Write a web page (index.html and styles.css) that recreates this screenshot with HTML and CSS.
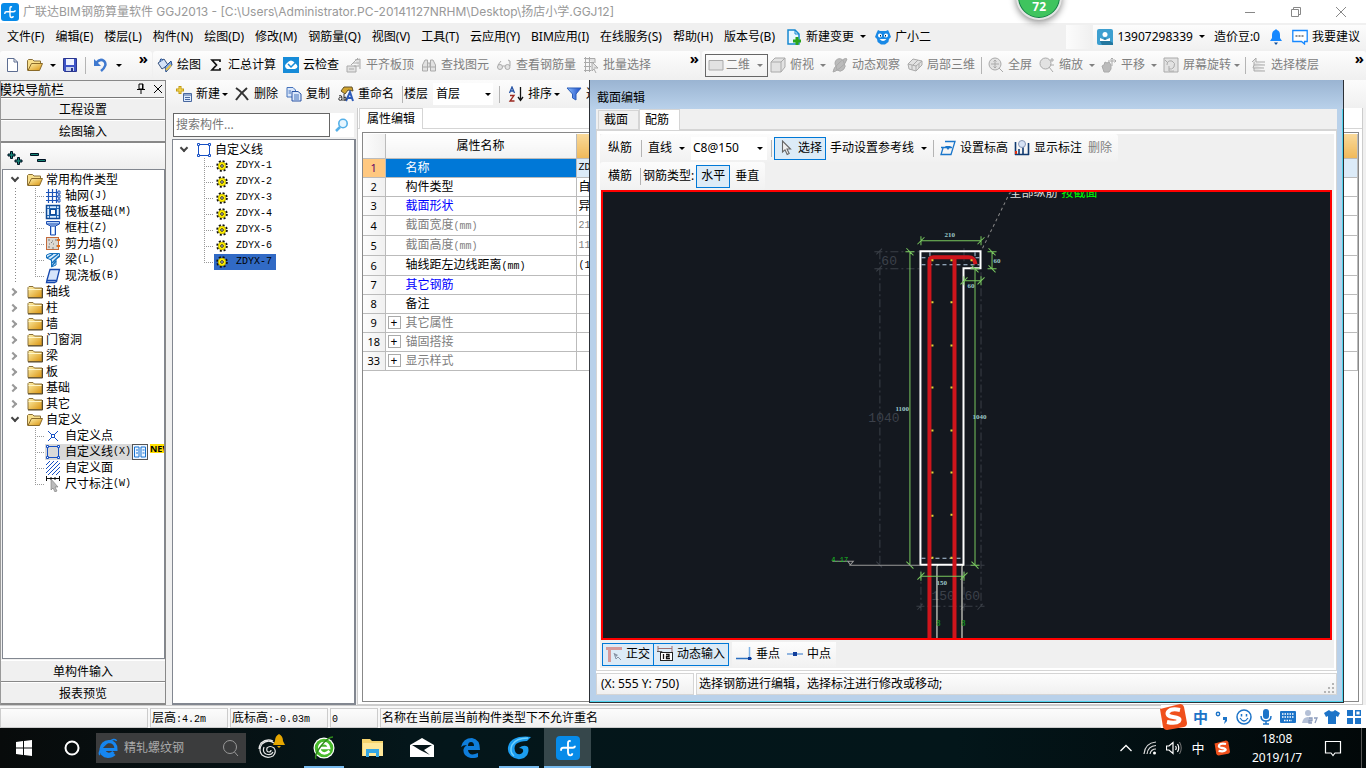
FILE: index.html
```html
<!DOCTYPE html>
<html lang="zh-CN">
<head>
<meta charset="utf-8">
<title>广联达BIM钢筋算量软件 GGJ2013</title>
<link rel="stylesheet" href="styles.css">
</head>
<body>
<svg class="defs" aria-hidden="true">
  <defs>
    <linearGradient id="gold" x1="0" y1="0" x2="1" y2="1"><stop offset="0" stop-color="#fff3b0"/><stop offset="1" stop-color="#d9920c"/></linearGradient>
    <linearGradient id="funnel"><stop offset="0" stop-color="#8fc1ff"/><stop offset="1" stop-color="#1747c4"/></linearGradient>
  </defs>
  <symbol id="folder" viewBox="0 0 16 16"><path d="M1 13.500V3.500L2 2.500H6L7.500 4H15V13.500Z" fill="url(#gold)" stroke="#8a7038"/><path d="M1.500 5.500H14.500" stroke="#fff6c8"/><path d="M15.500 4V14H1" fill="none" stroke="#54472a"/></symbol>
  <symbol id="open" viewBox="0 0 16 16"><path d="M.5 13.500V3.500L1.500 2.500H5.500L7 4H13.500V7" fill="#f8df8c" stroke="#8a7038"/><path d="M1 13.500L4.500 6.500H15.500L12.500 13.500Z" fill="url(#gold)" stroke="#8a6a28"/></symbol>
  <symbol id="gear" viewBox="0 0 12 12"><circle cx="6" cy="6" r="4.800" fill="none" stroke="#111" stroke-width="2" stroke-dasharray="2 1.770"/><circle cx="6" cy="6" r="3.900" fill="#ffef00" stroke="#8a8000" stroke-width=".5"/><circle cx="6" cy="6" r="1.300" fill="#fff" stroke="#222"/></symbol>
  <symbol id="frame" viewBox="0 0 16 16"><path d="M2.500 2.500H13.500V13.500H2.500Z" fill="none" stroke="#1650c4"/><path d="M1.500 1.500h2v2h-2zM12.500 1.500h2v2h-2zM1.500 12.500h2v2h-2zM12.500 12.500h2v2h-2z" fill="#fff" stroke="#1650c4"/></symbol>
  <symbol id="axes" viewBox="0 0 16 16"><path d="M3.500 1V15M7.500 1V15M11.500 1V15M1 4.500H15M1 8.500H15M1 12.500H15" stroke="#1e55b8" stroke-width="1.200"/><path d="M13 3h2v3h-2zM13 7h2v3h-2zM13 11h2v3h-2z" fill="#fff" stroke="#1e55b8"/></symbol>
  <symbol id="raft" viewBox="0 0 16 16"><rect x="1.500" y="1.500" width="13" height="13" fill="#d8ecff" stroke="#0f4a96" stroke-width="1.500"/><path d="M4.500 2V14M11.500 2V14M2 4.500H14M2 11.500H14" stroke="#2367b4"/><rect x="5.500" y="5.500" width="5" height="5" fill="#fff" stroke="#0f4a96"/></symbol>
  <symbol id="column" viewBox="0 0 16 16"><path d="M1.500 1.500H14.500V4L10.500 6V15H5.500V6L1.500 4Z" fill="#b8d4fa" stroke="#1d4db0"/><path d="M1.500 4H14M5.500 6H10.500" stroke="#1d4db0"/><path d="M8 7V14" stroke="#fff" stroke-width="2"/></symbol>
  <symbol id="wall" viewBox="0 0 16 16"><rect x="1.500" y="1.500" width="12" height="12" fill="#ddd8d2" stroke="#c46a3b"/><path d="M3 4H5M7 5H8M10 4H12M4 8H5M8 8H9M3 11H5M7 12H9M11 10H12M6 6.500H7" stroke="#777"/><path d="M12 4H15M12 10H15" stroke="#e36b16" stroke-width="2"/></symbol>
  <symbol id="beam" viewBox="0 0 16 16"><path d="M1.500 3L5 1.500H14.500V5L11 7V13L6.500 15V8L1.500 6Z" fill="#d5ecff" stroke="#1672bd"/><path d="M2 6L8 2M5 8L13 2M7 14L11 9M7 11L14 4" stroke="#1672bd" stroke-width="1.400"/></symbol>
  <symbol id="slab" viewBox="0 0 16 16"><path d="M5 1.500H14.500L11.500 13.500L9.500 14.500H1.500L2 12Z" fill="#d5e4fb" stroke="#1547ad" stroke-width="1.300"/><path d="M2 12.500H11.500" stroke="#1547ad" stroke-width="1.500"/></symbol>
  <symbol id="arrow" viewBox="0 0 16 16"><path d="M4.500 1V12L7 9.800L9.200 14.500L11.200 13.500L9 9H12.500Z" fill="#eee" stroke="#666" stroke-width="1.100"/></symbol>
  <symbol id="sogou" viewBox="0 0 28 28"><path d="M1 6L21 1Q24 1 25 4L28 20Q28 23 25 24L8 27Q5 27 4 24Z" fill="#f0501c"/><path d="M21 7Q12 5 9 9Q7 13 14 14Q22 15 20 18Q17 21 8 19" fill="none" stroke="#fff" stroke-width="4"/></symbol>
  <symbol id="glodon" viewBox="0 0 18 18"><rect width="18" height="18" rx="3" fill="#078be9"/><path d="M11 4Q9 3 9 5.500V12Q9 14.500 10.800 14.500Q12.200 14.500 12.200 13M3.800 11V10.500Q3.800 8.800 5.500 8.800H12.500Q14.200 8.800 14.200 7.300" fill="none" stroke="#fff" stroke-width="1.400"/></symbol>
  <symbol id="ie" viewBox="0 0 20 20"><path d="M15.500 14Q13 17 9.500 16Q6 15 6 11.500H18Q18 4 11 3.500Q4 4 3 11Q3 18 10 18.500Q14 18.500 16.500 16" fill="none" stroke="currentColor" stroke-width="3"/><path d="M2 17Q-1 14 9 5Q17-1 18.500 3" fill="none" stroke="currentColor" stroke-width="1.500"/></symbol>
</svg>

<div class="app">
  <header class="titlebar">
    <svg class="i18"><use href="#glodon"/></svg>
    <h1>广联达BIM钢筋算量软件 GGJ2013 - [C:\Users\Administrator.PC-20141127NRHM\Desktop\扬店小学.GGJ12]</h1>
    <div class="winbtns">
      <button aria-label="最小化"><svg viewBox="0 0 12 12"><path d="M1 6.500H11"/></svg></button>
      <button aria-label="还原"><svg viewBox="0 0 12 12"><path d="M1.500 3.500H8.500V10.500H1.500ZM3.500 3V1.500H10.500V8.500H9"/></svg></button>
      <button aria-label="关闭"><svg viewBox="0 0 12 12"><path d="M1 1L11 11M11 1L1 11"/></svg></button>
    </div>
    <div class="ball">72</div>
  </header>

  <nav class="menubar">
    <button>文件(F)</button><button>编辑(E)</button><button>楼层(L)</button><button>构件(N)</button><button>绘图(D)</button><button>修改(M)</button><button>钢筋量(Q)</button><button>视图(V)</button><button>工具(T)</button><button>云应用(Y)</button><button>BIM应用(I)</button><button>在线服务(S)</button><button>帮助(H)</button><button>版本号(B)</button>
    <button><svg class="i16" viewBox="0 0 16 16"><path d="M2 1H9L13 5V15H2Z" fill="#eaf7ff" stroke="#1788d0" stroke-width="1.500"/><path d="M9 1V5H13" fill="none" stroke="#1788d0"/><path d="M11 8V16M7 12H15" stroke="#2aa51c" stroke-width="3"/></svg>新建变更<i class="arr"></i></button>
    <button><svg class="i16" viewBox="0 0 16 16"><path d="M3 1L5 2H11L13 1L14.500 4L16 8L14 10Q14 13 12 14L10 15.500H6L4 14Q2 13 2 10L0 8L1.500 4Z" fill="#1989e6"/><circle cx="5" cy="6.500" r="2" fill="#fff"/><circle cx="11" cy="6.500" r="2" fill="#fff"/><path d="M4.500 10H11.500Q8 14 4.500 10" fill="#fff"/><path d="M5.500 6V7.500M10.500 6V7.500" stroke="#024"/></svg>广小二</button>
    <span class="blank"></span>
    <div class="account">
      <button><svg class="i16" viewBox="0 0 16 16"><rect width="16" height="16" rx="2" fill="#3d9fd0"/><path d="M8 9L16 14V16H5L3 12Z" fill="#24789f"/><circle cx="8" cy="5.500" r="2.500" fill="#fff"/><path d="M3 9L8 11L13 9V12H3Z" fill="#fff"/></svg>13907298339<i class="arr"></i></button>
      <button>造价豆:0</button>
      <button aria-label="消息"><svg class="i16" viewBox="0 0 16 16"><path d="M8 0L9 1Q12 2 12 6V9L14 12H2L4 9V6Q4 2 7 1Z" fill="#1688ff"/><path d="M6 13.500H10L8 16Z" fill="#0b4fa0"/></svg></button>
      <button><svg class="i16" viewBox="0 0 16 16"><path d="M.8 1.500H15.200V12.500H12.500V15L9.500 12.500H.8Z" fill="#fff" stroke="#1688ff" stroke-width="1.300"/><path d="M3.500 7H12.500" stroke="#222" stroke-width="1.200" stroke-dasharray="2 1"/></svg>我要建议</button>
    </div>
  </nav>

  <div class="toolbar main-tools">
    <div class="grp files">
      <button aria-label="新建文件"><svg class="i16" viewBox="0 0 16 16"><path d="M3.500 1.500H10L13.500 5V14.500H3.500Z" fill="#fff" stroke="#5d6d91"/><path d="M10 1.500V5H13.500" fill="none" stroke="#5d6d91"/></svg></button>
      <button aria-label="打开"><svg class="i16"><use href="#open"/></svg><i class="arr"></i></button>
      <button aria-label="保存"><svg class="i16" viewBox="0 0 16 16"><path d="M1.500 1.500H14.500V14.500H2.500L1.500 13.500Z" fill="#3d53c6" stroke="#2a368f"/><path d="M4 2H12V8H4Z" fill="#eef2ff"/><path d="M4 10H12V14H4Z" fill="#c9d3ee"/><path d="M9 11H11V14H9Z" fill="#26348b"/></svg></button>
      <i class="sep"></i>
      <button aria-label="撤销"><svg class="i16" viewBox="0 0 16 16"><path d="M3 6Q7 1 11 4Q15 8 8 14" fill="none" stroke="#3f79cf" stroke-width="2.500"/><path d="M1 2V9H8Z" fill="#3f79cf"/></svg><i class="arr"></i></button>
      <button class="more">»</button>
    </div>
    <div class="grp ops">
      <button><svg class="i16" viewBox="0 0 16 16"><path d="M1 6L7 2L11 8L5 12Z" fill="#d4e3f8" stroke="#38537e"/><path d="M3 5Q3 0 6 3M8 10L14 4L15 8L9 15Z" fill="#7ea6df" stroke="#274f8f"/><path d="M9 13L14 8" stroke="#e8c54c" stroke-width="2"/></svg>绘图</button>
      <button><svg class="i16" viewBox="0 0 16 16"><path d="M12 5V3H4L8.500 8L4 13H12V11" fill="none" stroke="#111" stroke-width="1.700"/></svg>汇总计算</button>
      <button><svg class="i16" viewBox="0 0 16 16"><rect width="16" height="16" fill="#168bd8"/><path d="M4 12Q0 9 4 6Q8 1 12 6Q17 10 12 12Z" fill="#fff"/><path d="M5 7L8 10L13 5" fill="none" stroke="#168bd8" stroke-width="1.500"/></svg>云检查</button>
      <button disabled><svg class="i16 gi" viewBox="0 0 16 16"><path d="M1 9H10V15H1ZM3 12H8M5 8L12 1M9 3L14 2V12M7 6H13M8 9H13"/></svg>平齐板顶</button>
      <button disabled><svg class="i16 gi" viewBox="0 0 16 16"><path d="M1.500 14V8L4 3H6.500V14ZM9.500 14V3H12L14.500 8V14ZM7 6H9V10H7M2 10H6M10 10H14"/></svg>查找图元</button>
      <button disabled><svg class="i16 gi" viewBox="0 0 16 16"><path d="M1.500 10a2.500 2.500 0 1 1 5 0a2.500 2.500 0 1 1-5 0M9 10a2.500 2.500 0 1 1 5 0a2.500 2.500 0 1 1-5 0M6.500 9H9M2 8L5 4M14 9V4L12 3"/></svg>查看钢筋量</button>
      <button disabled><svg class="i16 gi" viewBox="0 0 16 16"><path d="M1 1.500H12V6M1 5.500H11M1 9.500H8M1 13.500H8M2.500 0V15M6.500 0V15M9 5V14L11 12L13 16M9 5L15 11H11"/></svg>批量选择</button>
      <button class="more">»</button>
    </div>
    <div class="grp view">
      <label class="combo boxed"><svg class="i16 gi" viewBox="0 0 16 16"><path d="M1 3.500H15V13H1Z"/></svg><select aria-label="视图模式" disabled><option>二维</option></select><i class="arr"></i></label>
      <button disabled><svg class="i16 gi" viewBox="0 0 16 16"><path d="M1 5L5 1H15V10L11 15H1ZM1 5H11V15M11 5L15 1"/></svg>俯视<i class="arr"></i></button>
      <button disabled><svg class="i16 gi" viewBox="0 0 16 16"><path d="M4 9a4.500 4.500 0 1 1 8-3a5 5 0 0 1-7 7ZM1 15Q1 11 7 6Q13 0 15 2Q14 7 8 11Q3 15 1 15" fill="#bbb"/></svg>动态观察</button>
      <button disabled><svg class="i16 gi" viewBox="0 0 16 16"><path d="M1 7L6 2L15 4V8L9 14L2 12ZM1 7L9 9V14M9 9L15 4M5 8V13M11 3L6 8M12 7V11"/></svg>局部三维</button>
      <i class="sep"></i>
      <button disabled><svg class="i16 gi" viewBox="0 0 16 16"><circle cx="7" cy="7" r="6"/><path d="M7 3V11M3 7H11M5.500 4.500L7 3L8.500 4.500M5.500 9.500L7 11L8.500 9.500M11 11L15 15"/></svg>全屏</button>
      <button disabled><svg class="i16 gi" viewBox="0 0 16 16"><circle cx="6.500" cy="6.500" r="5.500"/><path d="M10 10L14 15M13 1V5M11 3H15M11 8H15"/></svg>缩放<i class="arr"></i></button>
      <button disabled><svg class="i16 gi" viewBox="0 0 16 16"><path d="M3 15L1 9L3 8L4 5L6 6L8 5L10 8V12L8 15Z" fill="#bbb"/><path d="M11 1V9M7 4H15M9.500 2.500L11 1L12.500 2.500M13.500 2.500L15 4L13.500 5.500" fill="none"/></svg>平移<i class="arr"></i></button>
      <button disabled class="spin"><svg class="i16 gi" viewBox="0 0 16 16"><path d="M1 1H15V15H1ZM4 8Q4 3 9 4Q13 6 11 10Q9 13 6 12M6 9V14H11M2 3L5 6"/></svg>屏幕旋转<i class="arr"></i></button>
      <i class="sep"></i>
      <button disabled><svg class="i16 gi" viewBox="0 0 16 16"><path d="M1 5L5 1V5H14M3 5V8H14M3 8L2 11H13M3 11V14H14"/></svg>选择楼层</button>
      <button class="more">»</button>
    </div>
  </div>

  <main class="work">
    <aside class="nav">
      <div class="nav-title"><h2>模块导航栏</h2><button aria-label="固定"><svg viewBox="0 0 12 12"><path d="M4 1H8V6H4ZM7.500 1V6M2 6.500H10M6 7V11"/></svg></button><button aria-label="关闭"><svg viewBox="0 0 12 12"><path d="M2 2L10 10M10 2L2 10"/></svg></button></div>
      <button class="bar">工程设置</button>
      <button class="bar">绘图输入</button>
      <div class="nav-tools">
        <button aria-label="全部展开"><svg class="i16" viewBox="0 0 16 16"><path d="M3.500 1.500H5.500V4H8V6H5.500V8.500H3.500V6H1V4H3.500ZM10.500 7.500H12.500V10H15V12H12.500V14.500H10.500V12H8V10H10.500Z" fill="#168476" stroke="#012"/></svg></button>
        <button aria-label="全部折叠"><svg class="i16" viewBox="0 0 16 16"><path d="M.5 3.500H8.500V5.500H.5ZM7.500 9.500H15.500V11.500H7.500Z" fill="#168476" stroke="#012"/></svg></button>
      </div>
      <ul class="tree">
        <li class="grp-row open"><i class="chev"></i><svg class="i16"><use href="#open"/></svg>常用构件类型</li>
        <li><ul class="kids lined">
          <li><svg class="i16"><use href="#axes"/></svg>轴网<span class="m">(J)</span></li>
          <li><svg class="i16"><use href="#raft"/></svg>筏板基础<span class="m">(M)</span></li>
          <li><svg class="i16"><use href="#column"/></svg>框柱<span class="m">(Z)</span></li>
          <li><svg class="i16"><use href="#wall"/></svg>剪力墙<span class="m">(Q)</span></li>
          <li><svg class="i16"><use href="#beam"/></svg>梁<span class="m">(L)</span></li>
          <li><svg class="i16"><use href="#slab"/></svg>现浇板<span class="m">(B)</span></li>
        </ul></li>
        <li class="grp-row"><i class="chev"></i><svg class="i16"><use href="#folder"/></svg>轴线</li>
        <li class="grp-row"><i class="chev"></i><svg class="i16"><use href="#folder"/></svg>柱</li>
        <li class="grp-row"><i class="chev"></i><svg class="i16"><use href="#folder"/></svg>墙</li>
        <li class="grp-row"><i class="chev"></i><svg class="i16"><use href="#folder"/></svg>门窗洞</li>
        <li class="grp-row"><i class="chev"></i><svg class="i16"><use href="#folder"/></svg>梁</li>
        <li class="grp-row"><i class="chev"></i><svg class="i16"><use href="#folder"/></svg>板</li>
        <li class="grp-row"><i class="chev"></i><svg class="i16"><use href="#folder"/></svg>基础</li>
        <li class="grp-row"><i class="chev"></i><svg class="i16"><use href="#folder"/></svg>其它</li>
        <li class="grp-row open"><i class="chev"></i><svg class="i16"><use href="#open"/></svg>自定义</li>
        <li><ul class="kids">
          <li><svg class="i16" viewBox="0 0 16 16"><path d="M3 3L13 13M13 3L3 13" stroke="#1650c4"/><rect x="6.500" y="6.500" width="3" height="3" fill="#fff" stroke="#1650c4"/></svg>自定义点</li>
          <li class="cur"><span class="hl"><svg class="i16"><use href="#frame"/></svg>自定义线<span class="m">(X)</span></span><svg class="i16 book" viewBox="0 0 16 16"><rect x=".5" y=".5" width="15" height="15" fill="#eef6ff" stroke="#555"/><path d="M2.500 3H7V13H2.500ZM9 3H13.500V13H9ZM4 6H6M4 9H6M10.500 6H12.500M10.500 9H12.500" fill="none" stroke="#1673d2"/></svg><b class="new">NEW</b></li>
          <li><svg class="i16" viewBox="0 0 16 16"><path d="M1 5L5 1M1 9L9 1M1 13L13 1M3 15L15 3M7 15L15 7M11 15L15 11" stroke="#1650c4"/></svg>自定义面</li>
          <li><svg class="i16" viewBox="0 0 16 16"><path d="M1.500 0V5M14.500 0V5M1 2.500H15M6 1V4M10 1V4" stroke="#111"/><path d="M6 3V14L8 12L10 16L12 15L10 11H13Z" fill="#bbb" stroke="#777" stroke-width=".6"/></svg>尺寸标注<span class="m">(W)</span></li>
        </ul></li>
      </ul>
      <button class="bar">单构件输入</button>
      <button class="bar">报表预览</button>
    </aside>

    <section class="right">
      <div class="toolbar comp-tools">
        <button><svg class="i16" viewBox="0 0 16 16"><path d="M4 0V8M0 4H8" stroke="#c29a10" stroke-width="3"/><path d="M4 1V7M1 4H7" stroke="#ffe564"/><path d="M7.500 7.500H15.500V15.500H7.500Z" fill="#dceafc" stroke="#48679f"/><path d="M8 9H15M9 11.500H14M9 13.500H14" stroke="#48679f"/></svg>新建<i class="arr"></i></button>
        <button><svg class="i16" viewBox="0 0 16 16"><path d="M2 2Q8 6 14 14M13 2Q6 8 2 14" fill="none" stroke="#333" stroke-width="2"/></svg>删除</button>
        <button><svg class="i16" viewBox="0 0 16 16"><path d="M1 1.500H7L9.500 4V11H1Z" fill="#dbe8fb" stroke="#4572bb"/><path d="M6 5.500H12L15 8V15H6Z" fill="#dbe8fb" stroke="#2b55a4"/><path d="M8 9H13M8 11H13M8 13H13M2.500 5H5M2.500 7H5" stroke="#4572bb"/></svg>复制</button>
        <button><svg class="i16" viewBox="0 0 16 16"><path d="M3 5L6 1H14L15 5L10 4L7 8Z" fill="#d2a52f" stroke="#61502a"/><path d="M8 15L12 6L15 15M9.500 12H14" fill="none" stroke="#2e5bb8" stroke-width="2"/><path d="M1 10Q4 8 4 13V15M4 11Q0 11 1 14Q3 15 4 13M6 8V15M6 12Q8 9 8 14H6" fill="none" stroke="#333"/></svg>重命名</button>
        <i class="sep"></i>
        <label class="combo floor">楼层<select><option>首层</option></select><i class="arr"></i></label>
        <i class="sep"></i>
        <button><svg class="i16" viewBox="0 0 16 16"><path d="M1.500 7L4 1L6.500 7M2.500 5H5.500" fill="none" stroke="#2452a4" stroke-width="1.300"/><path d="M2 9.500H6L2 15H6.500" fill="none" stroke="#9b2820" stroke-width="1.300"/><path d="M12.500 1V14M10 11L12.500 14.500L15 11" fill="none" stroke="#111" stroke-width="1.300"/></svg>排序<i class="arr"></i></button>
        <button><svg class="i16" viewBox="0 0 16 16"><path d="M1 2H15L10 8V14L6.500 12V8Z" fill="url(#funnel)" stroke="#2b5db8"/></svg>过滤</button>
      </div>
      <div class="panes">
        <section class="comps">
          <div class="search"><input type="text" placeholder="搜索构件..." aria-label="搜索构件"><button aria-label="搜索"><svg class="i16" viewBox="0 0 16 16"><circle cx="9" cy="6.500" r="4.200" fill="#e7f6ff" stroke="#55b0e8" stroke-width="1.600"/><path d="M6 10L2 14" stroke="#55b0e8" stroke-width="2.500"/></svg></button></div>
          <ul class="tree">
            <li class="grp-row open"><i class="chev"></i><svg class="i16"><use href="#frame"/></svg>自定义线</li>
            <li><ul class="kids">
              <li><span class="it"><svg><use href="#gear"/></svg>ZDYX-1</span></li>
              <li><span class="it"><svg><use href="#gear"/></svg>ZDYX-2</span></li>
              <li><span class="it"><svg><use href="#gear"/></svg>ZDYX-3</span></li>
              <li><span class="it"><svg><use href="#gear"/></svg>ZDYX-4</span></li>
              <li><span class="it"><svg><use href="#gear"/></svg>ZDYX-5</span></li>
              <li><span class="it"><svg><use href="#gear"/></svg>ZDYX-6</span></li>
              <li><span class="it sel"><svg><use href="#gear"/></svg>ZDYX-7</span></li>
            </ul></li>
          </ul>
        </section>
        <section class="props">
          <div class="tabs"><button class="tab on">属性编辑</button></div>
          <div class="sheet">
            <table>
              <thead><tr><th></th><th>属性名称</th><th class="val"></th></tr></thead>
              <tbody>
                <tr class="sel"><th>1</th><td>名称</td><td class="m">ZDYX-7</td></tr>
                <tr><th>2</th><td>构件类型</td><td>自定义线</td></tr>
                <tr><th>3</th><td class="blue">截面形状</td><td>异形</td></tr>
                <tr class="dim"><th>4</th><td>截面宽度<span class="m">(mm)</span></td><td class="m">210</td></tr>
                <tr class="dim"><th>5</th><td>截面高度<span class="m">(mm)</span></td><td class="m">1100</td></tr>
                <tr><th>6</th><td>轴线距左边线距离<span class="m">(mm)</span></td><td class="m">(105)</td></tr>
                <tr><th>7</th><td class="blue">其它钢筋</td><td></td></tr>
                <tr><th>8</th><td>备注</td><td></td></tr>
                <tr class="dim fold"><th>9</th><td><button aria-label="展开">+</button>其它属性</td><td></td></tr>
                <tr class="dim fold"><th>18</th><td><button aria-label="展开">+</button>锚固搭接</td><td></td></tr>
                <tr class="dim fold"><th>33</th><td><button aria-label="展开">+</button>显示样式</td><td></td></tr>
              </tbody>
            </table>
          </div>
        </section>
      </div>
    </section>

    <section class="dialog" role="dialog" aria-label="截面编辑">
      <h2>截面编辑</h2>
      <div class="dlg-body">
        <div class="tabs"><button class="tab">截面</button><button class="tab on">配筋</button></div>
        <div class="page">
          <div class="toolbar r1">
            <button>纵筋</button><i class="sep"></i>
            <button>直线<i class="arr"></i></button>
            <label class="combo rebar"><select aria-label="钢筋规格"><option>C8@150</option></select><i class="arr"></i></label><i class="sep"></i>
            <button class="on"><svg class="i16"><use href="#arrow"/></svg>选择</button>
            <button>手动设置参考线<i class="arr"></i></button><i class="sep"></i>
            <button><svg class="i16" viewBox="0 0 16 16"><path d="M5 1.500H15L11 14.500H1L3 8M1 7.500H12" fill="none" stroke="#1a76ca" stroke-width="1.300"/><path d="M5 6H11L8 10Z" fill="#1a76ca"/></svg>设置标高</button>
            <button><svg class="i16" viewBox="0 0 16 16"><path d="M1.500 2V15M14.500 3V15M1 14.500H15M5 9V14M9 7V14" stroke="#103a70" stroke-width="1.600"/><circle cx="8" cy="4" r="3.500" fill="#d6e2f5" stroke="#8898b8"/><path d="M1 11H3V14H1Z" fill="#e03010"/></svg>显示标注</button>
            <button disabled>删除</button>
          </div>
          <div class="toolbar r2">
            <button>横筋</button><i class="sep"></i><span>钢筋类型:</span><button class="on">水平</button><button>垂直</button>
          </div>
          <div class="canvas">
            <svg viewBox="604 192 726 445" preserveAspectRatio="xMidYMid meet">
              <g class="guide"><path d="M880.500 251V564M981.500 272V606M921.500 570V611M964.500 570V611M875 251.500H920M875 268.500H920M917 605.500H985M877 254L884 247M877 271L884 264M877 561L884 568M918 609L925 601M961 609L968 601M978 609L985 601M964.500 248V265M950 564.500H985"/></g>
              <path class="lead" d="M983 248L1010 193L1014 192"/>
              <g class="ghost"><text x="882" y="265">60</text><text x="869" y="421">1040</text><text x="932" y="599">150</text><text x="965" y="599">60</text></g>
              <path class="conc" d="M921 251H981V268H964V564H921Z"/>
              <path class="hid" d="M922 264.500H980M922 557.500H963M930.500 252V264M975.500 252V264M922 257.500H930M976 257.500H981"/>
              <path class="post" d="M937.500 638V566Q937.500 564.500 939 564.500M962.500 638V566Q962.500 564.500 964 564.500"/>
              <path class="bar-line" d="M930 638V261Q930 257 934 257H969Q975 257 976 264M955 257V638"/>
              <g class="dots"><path d="M932 260H934M951 260H953M971 260H973M932 302H934M951 302H953M932 345H934M951 345H953M932 387H934M951 387H953M932 430H934M951 430H953M932 472H934M951 472H953M932 515H934M951 514H953M932 557H934M951 557H953"/></g>
              <path class="dimline" d="M921.500 236V245M981.500 236V245M921 240.500H982M918 244L925 237M978 244L985 237M910.500 251V564M906 251.500H915M907 248L914 255M907 561L914 568M992.500 251V268M988 251.500H997M988 268.500H997M989 248L996 255M989 265L996 272M964.500 276V285M981.500 276V285M964 280.500H982M961 284L968 277M978 284L985 277M975.500 268V564M971 268.500H980M971 564.500H980M972 265L979 272M972 561L979 568M921.500 571V580M964.500 571V580M921 575.500H965M918 579L925 572M961 579L968 572"/>
              <path class="level" d="M833 560.500H854L851 564L848 560M850 564.500H921"/>
              <g class="num"><text x="945" y="237">210</text><text x="994" y="263">60</text><text x="968" y="288">60</text><text x="896" y="411">1100</text><text x="973" y="419">1040</text><text x="937" y="584">150</text></g>
              <text class="elev" x="832" y="561">4.17</text>
              <g class="green"><text x="937" y="625">8</text><text x="962" y="625">8</text></g>
              <text class="note" x="1010" y="197">全部纵筋<tspan dx="4">按截面</tspan></text>
            </svg>
          </div>
          <div class="toolbar r3">
            <button class="on"><svg class="i16" viewBox="0 0 16 16"><path d="M0 1H16V4H5V16H2V4H0Z" fill="#d79a9a"/><path d="M8 7L10 13L12 11L15 14" fill="none" stroke="#8793a5"/><path d="M8 7L12 9L10 11Z" fill="#8793a5"/></svg>正交</button><button class="on"><svg class="i16" viewBox="0 0 16 16"><path d="M1 0V6M15 0V6M1 2.500H15" stroke="#a07070"/><path d="M0 5.500H5L4 15" fill="none" stroke="#555"/><rect x="3.500" y="6.500" width="12" height="8" fill="#fff" stroke="#222"/><path d="M6.500 8V13M9 8.500H12V10.500H9.500V12.500H13" fill="none" stroke="#111" stroke-width="1.300"/></svg>动态输入</button>
            <div class="grp snap">
              <button><svg class="i16" viewBox="0 0 16 16"><path d="M0 12.500H16" stroke="#2a6fc0" stroke-width="1.500"/><path d="M13.500 1V12" stroke="#7db1e6" stroke-width="1.500"/><path d="M12 11H15V14H12Z" fill="#123e9b"/></svg>垂点</button>
              <button><svg class="i16" viewBox="0 0 16 16"><path d="M0 8H16" stroke="#6f9fd8" stroke-width="1.500"/><path d="M6 6H10V10H6Z" fill="#123e9b"/></svg>中点</button>
            </div>
          </div>
        </div>
        <footer class="dlg-status"><span class="xy">(X: 555 Y: 750)</span><span class="msg">选择钢筋进行编辑，选择标注进行修改或移动;</span><svg class="grip" viewBox="0 0 12 12"><path d="M8 1h2v2H8zM8 5h2v2H8zM4 5h2v2H4zM8 9h2v2H8zM4 9h2v2H4zM0 9h2v2H0z" fill="#b5b5b5"/></svg></footer>
      </div>
    </section>
  </main>

  <footer class="status">
    <span class="c1"></span><span class="c2">层高<b class="m">:4.2m</b></span><span class="c3">底标高<b class="m">:-0.03m</b></span><span class="c4"><b class="m">0</b></span><span class="c5">名称在当前层当前构件类型下不允许重名</span>
    <div class="ime">
      <svg class="s28"><use href="#sogou"/></svg>
      <span>中</span>
      <svg class="i16" viewBox="0 0 16 16"><circle cx="4" cy="5" r="1.700" fill="none" stroke="#1d74c8" stroke-width="1.400"/><path d="M9 8h4v4l-3 3 1-4H9z" fill="#1d74c8"/></svg>
      <svg class="i16" viewBox="0 0 16 16"><circle cx="8" cy="8" r="7" fill="none" stroke="#1d74c8" stroke-width="1.500"/><path d="M5.500 5V7.500M10.500 5V7.500" stroke="#1d74c8" stroke-width="1.500"/><path d="M4 9Q8 15 12 9" fill="none" stroke="#1d74c8" stroke-width="1.300"/></svg>
      <svg class="i16" viewBox="0 0 16 16"><rect x="5" y="0" width="6" height="10" rx="3" fill="#1d74c8"/><path d="M3 7Q3 12 8 12Q13 12 13 7M8 12V15M5 15H11" fill="none" stroke="#1d74c8" stroke-width="1.500"/></svg>
      <svg class="i16" viewBox="0 0 16 16"><rect x="0" y="2" width="16" height="12" rx="1" fill="#1d74c8"/><path d="M2 5H14M2 8H14M4 11.500H12" stroke="#fff" stroke-width="1.500" stroke-dasharray="1.500 1"/></svg>
      <svg class="i16" viewBox="0 0 16 16"><circle cx="6" cy="4" r="3" fill="#b4c0d6"/><path d="M0 14Q1 8 6 8Q10 8 10 14Z" fill="#b4c0d6"/><path d="M7 9H10V11.500H7V14H10M12 9H15L13 14" fill="none" stroke="#8b9bbb" stroke-width="1.300"/></svg>
      <svg class="i16" viewBox="0 0 16 16"><path d="M5 1Q8 4 11 1L16 4L14 8L12 7V15H4V7L2 8L0 4Z" fill="#1d74c8"/></svg>
      <svg class="i16" viewBox="0 0 16 16"><path d="M1 1H7V7H1ZM1 9H7V15H1ZM9 9H15V15H9Z" fill="#1d74c8"/><path d="M9.700 1.700H14.300V6.300H9.700Z" fill="none" stroke="#1d74c8" stroke-width="1.400"/></svg>
    </div>
  </footer>

  <footer class="taskbar">
    <button class="tk" aria-label="开始"><svg class="i16" viewBox="0 0 16 16"><path d="M0 2L7 1V7.500H0ZM8 1L16 0V7.500H8ZM0 8.500H7V15L0 14ZM8 8.500H16V16L8 15Z" fill="#fff"/></svg></button>
    <button class="tk" aria-label="Cortana"><svg class="i16" viewBox="0 0 16 16"><circle cx="8" cy="8" r="6.500" fill="none" stroke="#fff" stroke-width="2"/></svg></button>
    <label class="find"><svg class="i20 c-ie"><use href="#ie"/></svg><input type="text" placeholder="精轧螺纹钢" aria-label="搜索"><svg class="i20" viewBox="0 0 20 20"><circle cx="10" cy="9" r="6.500" fill="none" stroke="#999"/><path d="M14.500 14L18 18" stroke="#999"/></svg></label>
    <button class="tk" aria-label="广联达消息"><svg class="i28" viewBox="0 0 28 28"><path d="M17 9Q11 5 5 10Q1 16 5 21Q10 25 16 22Q20 18 17 14Q13 11 10 14Q9 18 12 18Q14 18 14 16M16 7Q10 4 4 9Q2 12 2 15M7 13Q5 18 9 20Q14 22 16 18" fill="none" stroke="#e8e8e8" stroke-width="1.200"/><path d="M22 0Q18 2 18 7L16 11H28L26 7Q26 2 22 0ZM20 12H24L22 14Z" fill="#e6a700"/></svg></button>
    <button class="tk run" aria-label="浏览器"><svg class="i24" viewBox="0 0 24 24"><circle cx="12" cy="12" r="10.500" fill="#fff"/><circle cx="12" cy="12" r="9.300" fill="#48b92b"/><path d="M17.500 15Q12 20 8 15Q6 10 10 7.500Q16 6 17 12H8" fill="none" stroke="#fff" stroke-width="2.700"/><path d="M4 23Q2 19 9 10T21 1" fill="none" stroke="#2f8a1c" stroke-width="1.500"/></svg></button>
    <button class="tk" aria-label="文件资源管理器"><svg class="i24" viewBox="0 0 24 24"><path d="M1 3H9L11 5H22V20H1Z" fill="#f6d46e"/><path d="M2 7H22V20H2Z" fill="#ffe899"/><path d="M5 21V13H18V21H15V17H8V21Z" fill="#34a6e4"/></svg></button>
    <button class="tk" aria-label="邮件"><svg class="i24" viewBox="0 0 24 24"><path d="M0 9L12 2L24 9V21H0Z" fill="#fff"/><path d="M2 9H22L14 14L20 19L10 14Z" fill="#06161a"/></svg></button>
    <button class="tk" aria-label="Edge"><svg class="i20" viewBox="0 0 20 20"><path d="M0 9Q2 0 11 0Q19 1 19 12H7Q8 19 17 15V19Q9 22 4 17Q0 11 6 7Q2 7 0 9ZM7 8H13Q13 4 10 4Q7 4 7 8" fill="#0f7ddb"/></svg></button>
    <button class="tk run" aria-label="广联达G"><svg class="i24" viewBox="0 0 24 24"><path d="M24 1Q19 0 12 1Q4 3 2 8Q-1 15 4 20Q10 25 17 22Q23 18 21 11Q17 8 12 12Q17 12 16 16Q13 20 9 17Q6 12 9 8Q13 5 20 5Z" fill="#1b9df0"/><path d="M21 2Q9 2 5 9Q2 16 7 20" fill="none" stroke="#6ed1ff" stroke-width="1.500"/></svg></button>
    <button class="tk run act" aria-label="GGJ2013"><svg class="i24" viewBox="0 0 18 18"><use href="#glodon"/></svg></button>
    <div class="tray">
      <svg class="i16" viewBox="0 0 16 16"><path d="M2.500 11L8 5.500L13.500 11" fill="none" stroke="#fff" stroke-width="1.300"/></svg>
      <svg class="i16" viewBox="0 0 16 16"><path d="M2 14Q3 3 14 2M5 14Q6 6 14 5.500M8 14Q9 9 14 9" fill="none" stroke="#ddd" stroke-width="1.200"/><circle cx="12.500" cy="13" r="1.500" fill="#fff"/></svg>
      <svg class="i16" viewBox="0 0 16 16"><path d="M.5 6H3L7 2.500V13.500L3 10H.5ZM9.500 6Q11 8 9.500 10M11.500 4Q14 8 11.500 12" fill="none" stroke="#fff" stroke-width="1.200"/><path d="M13.500 2Q17 8 13.500 14" fill="none" stroke="#777"/></svg>
      <span>中</span>
      <svg class="i16" viewBox="0 0 28 28"><use href="#sogou"/></svg>
      <time>18:08<br>2019/1/7</time>
      <svg class="i18" viewBox="0 0 18 18"><path d="M1.500 2.500H16.500V14H11L9 16.500L7 14H1.500Z" fill="none" stroke="#fff" stroke-width="1.200"/></svg>
      <i class="desk"></i>
    </div>
  </footer>
</div>
</body>
</html>
```
FILE: styles.css
```css
* { box-sizing: border-box; }
html, body { height: 100%; }
body { margin: 0; overflow: hidden; font: 12px/16px "Noto Sans", "Noto Sans CJK SC", sans-serif; color: #000; background: #f0f0f0; }
button, input, select { font: inherit; color: inherit; margin: 0; padding: 0; border: 0; background: none; border-radius: 0; outline: 0; }
h1, h2, ul { margin: 0; padding: 0; font-size: 12px; font-weight: 400; list-style: none; }
svg { display: block; flex: none; }
.defs { width: 0; height: 0; position: absolute; }
.i16 { width: 16px; height: 16px; }
.i18 { width: 18px; height: 18px; }
.i20 { width: 20px; height: 20px; }
.i24 { width: 24px; height: 24px; }
.i28 { width: 28px; height: 28px; overflow: visible; }
.s28 { width: 28px; height: 28px; }
.m { font-family: "Liberation Mono", "Noto Sans CJK SC", monospace; font-size: 10px; font-weight: 400; }
.arr { flex: none; width: 0; height: 0; margin: 0 3px; border: 3px solid transparent; border-top-color: currentColor; border-bottom: 0; }
.sep { flex: none; width: 1px; height: 17px; background: #b4b4b4; }
.app { height: 100vh; display: flex; flex-direction: column; }

.titlebar { position: relative; flex: none; height: 23px; padding-left: 1px; display: flex; align-items: center; background: #fff; color: #999; gap: 4px; }
.titlebar h1 { font-family: Inter, "Noto Sans CJK SC", sans-serif; white-space: nowrap; }
.winbtns { margin-left: auto; display: flex; padding-right: 9px; }
.winbtns button { width: 46px; display: flex; justify-content: center; }
.winbtns button:last-child { width: 38px; padding-left: 6px; }
.winbtns svg { width: 12px; height: 12px; fill: none; stroke: #888; }
.ball { position: absolute; left: 76%; top: -26px; width: 46px; height: 46px; margin-left: -22px; border-radius: 50%; border: 2px solid #e4e4e4; background: #3fc45e; box-shadow: inset 0 0 0 1px #147a48, 0 2px 7px #888; color: #fff; font-weight: 700; text-align: center; padding-top: 23px; z-index: 3; }

.menubar { flex: none; height: 27px; padding: 0 0 0 7px; display: flex; align-items: center; gap: 11px; white-space: nowrap; background: #f0f0f0; }
.menubar button { display: flex; align-items: center; gap: 4px; }
.menubar button .arr { margin-left: 2px; margin-right: -2px; }
.blank { width: 24px; height: 24px; margin-left: auto; background: linear-gradient(90deg, #fcfcfc, #f1f1f1); margin-right: -8px; }
.account { height: 24px; display: flex; align-items: center; gap: 8px; padding: 0 6px 0 4px; background: linear-gradient(#fcfcfc, #f1f1f1); }
.account button:first-child { margin-right: 3px; }

.toolbar { display: flex; align-items: center; white-space: nowrap; }
.toolbar button { display: flex; align-items: center; gap: 4px; flex: none; }
.toolbar button:disabled, .combo.boxed { color: #808080; }
.toolbar select:disabled { opacity: 1; color: #808080; }
.gi { fill: #e2e2e2; stroke: #aaa; }
.main-tools { flex: none; height: 30px; background: #f0f0f0; }
.main-tools .grp { height: 28px; display: flex; align-items: center; gap: 7px; background: linear-gradient(#fdfdfd, #f0f0f0); border-radius: 3px; }
.files { flex: 0 0 152px; padding-left: 4px; }
.files button .arr { margin-right: -1px; }
.toolbar .more { margin-left: auto; align-self: flex-start; font-size: 15px; font-weight: 700; line-height: 14px; }
.files .more { margin-right: 4px; }
.ops { flex: 0 0 547px; margin-left: 1px; padding: 0 1px 0 4px; }
.view { flex: 1; margin-left: 2px; padding: 0 2px 0 3px; min-width: 0; }
.combo { display: flex; align-items: center; }
.combo select { appearance: none; opacity: 1; }
.boxed { height: 23px; padding: 0 1px 0 2px; gap: 2px; border: 1px solid #666; margin-right: -5px; }
.boxed select { width: 26px; }
.view button .arr { margin-right: -1px; margin-left: 2px; }
.view .sep { margin-left: -1px; margin-right: -1px; }
.view .spin .arr { margin-left: -1px; }
.view button + .sep ~ .sep { margin-right: -2px; }

.work { position: relative; flex: 1; min-height: 0; display: flex; background: #f0f0f0; }
.nav { flex: 0 0 166px; min-width: 0; overflow: hidden; display: flex; flex-direction: column; border: 1px solid #888; border-left-color: #999; background: #f0f0f0; }
.nav-title { flex: none; height: 17px; margin-right: 1px; display: flex; align-items: center; border-bottom: 1px solid #777; gap: 5px; }
.nav-title h2 { flex: 1; line-height: 14px; font-size: 13px; margin-left: -2px; }
.nav-title svg { width: 12px; height: 12px; fill: none; stroke: #000; }
.bar { flex: none; height: 22px; border-bottom: 1px solid #888; border-top: 1px solid #fff; text-align: center; padding-top: 1px; }
.nav-tools { height: 27px; flex: none; display: flex; align-items: center; gap: 7px; padding: 4px 6px 0; border-top: 1px solid #888; background: linear-gradient(#fdfdfd, #eee); }
.tree { flex: 1; min-height: 0; overflow: hidden; background: #fff; border: 1px solid #828790; line-height: 16px; white-space: nowrap; }
.nav .tree { margin: 0 0 1px 1px; padding-top: 2px; }
.grp-row { display: flex; align-items: center; height: 16px; padding-left: 8px; gap: 3px; }
.chev { flex: none; width: 6px; height: 6px; margin: 0 8px 0 -1px; border: solid #999; border-width: 2px 2px 0 0; transform: rotate(45deg); }
.grp-row.open .chev { border-color: #444; transform: rotate(135deg); margin: -4px 6px 0 1px; }
.kids { padding-left: 32px; }
.lined { background: repeating-linear-gradient(#888 0 1px, #fff 1px 3px) 12px 0 / 1px 100% no-repeat; }
.kids li { display: flex; align-items: center; height: 16px; gap: 4px; }
.kids li::before { content: ""; flex: none; width: 10px; height: 16px; margin-right: -4px; background: repeating-linear-gradient(#999 0 1px, #fff 1px 2px) 0 0 / 1px 16px no-repeat, repeating-linear-gradient(90deg, #999 0 1px, #fff 1px 2px) 0 8px / 10px 1px no-repeat; }
.kids li:last-child::before { background-size: 1px 8px, 10px 1px; }
.kids .m { margin-left: -4px; }
.hl { display: flex; gap: 4px; height: 16px; background: #d9d9d9; padding-right: 1px; }
.book { margin-left: -4px; }
.new { margin-left: -2px; height: 9px; line-height: 9px; font-size: 9px; background: #ffdf00; align-self: flex-start; }

.right { flex: 1; min-width: 0; display: flex; flex-direction: column; }
.comp-tools { flex: none; height: 28px; gap: 8px; padding-left: 10px; background: linear-gradient(#fcfcfc, #f0f0f0); }
.comp-tools button .arr { margin: 0 -2px 0 -2px; }
.floor select { width: 60px; height: 22px; margin-left: 5px; padding-left: 3px; background: #fff; }
.combo.floor { margin-left: -7px; margin-right: -5px; }
.floor .arr { margin-left: -8px; margin-right: 5px; }
.panes { flex: 1; min-height: 0; display: flex; }
.comps { flex: 0 0 184px; min-width: 0; margin-left: 6px; display: flex; flex-direction: column; }
.search { display: flex; height: 31px; padding: 5px 0 2px 1px; }
.search input { width: 157px; border: 1px solid #666; background: #fff; padding-left: 2px; }
.search input::placeholder { color: #777; opacity: 1; }
.search button { flex: 1; display: flex; align-items: center; justify-content: center; background: #fff; margin-right: 2px; }
.comps .tree { border-width: 1px 2px 2px 1px; padding-top: 2px; }
.comps .grp-row { padding-left: 7px; }
.comps .chev { margin-right: 5px; }
.it { display: flex; align-items: center; height: 16px; gap: 8px; padding: 0 4px 0 2px; font: 10px/16px "Liberation Mono", monospace; }
.it svg { width: 12px; height: 12px; }
.sel.it { background: #316ac5; }
.comps .kids { padding-left: 31px; }

.props { flex: 1; min-width: 0; margin: 0 3px 0 1px; border: 1px solid #ccc; border-top: 0; background: #fff; display: flex; flex-direction: column; padding: 0 3px 2px 2px; }
.tabs { display: flex; flex: none; align-items: flex-end; height: 21px; border-bottom: 1px solid #d5d5d5; }
.props .tabs { margin: 0 -3px 0 -2px; padding-left: 1px; }
.tab { height: 19px; padding: 0 8px 0 5px; background: #f0f0f0; border: 1px solid #d5d5d5; border-bottom: 0; }
.tab.on { height: 21px; background: #fff; margin-bottom: -1px; }
.props .tab { padding: 0 7px; }
.sheet { flex: 1; margin: 3px 0 0 2px; padding-top: 1px; border: 1px solid #888; overflow: hidden; }
table { width: 100%; table-layout: fixed; border-collapse: collapse; }
table th, table td { height: 19px; padding: 1px 0 0; font-weight: 400; border: solid #bbb; border-width: 0 1px 1px 0; line-height: 16px; }
thead th { height: 24px; background: linear-gradient(#fff, #f2f2f2); }
thead th.val { background: linear-gradient(#f9d99a, #f0b95a); }
th:first-child { width: 22px; background: linear-gradient(90deg, #fcfcfc, #f0f0f0); font-size: 11px; }
th:nth-child(2) { width: 191px; }
tbody td:nth-child(2) { padding-left: 20px; }
tbody td:nth-child(3) { padding-left: 2px; }
tbody .sel th { background: #ffc880; color: #606; }
tbody .sel td:nth-child(2) { background: #0078d7; color: #fff; }
tbody .sel td:nth-child(3) { background: #dcebf8; }
.dim td { color: #808080; }
.blue { color: #00f; }
tbody .fold td:nth-child(2) { padding-left: 2px; }
.fold button { width: 13px; height: 13px; margin: -2px 5px 0 0; border: 1px solid #aaa; line-height: 11px; color: #000; vertical-align: middle; background: #fff; }

.dialog { position: absolute; left: 589px; right: 22px; top: 0; bottom: 2px; display: flex; flex-direction: column; border: solid #2c3036; border-width: 0 1px 1px; padding: 0 6px 7px; background: #b9d1ea; box-shadow: inset -1px -1px #4fd4ee; }
.dialog h2 { flex: none; height: 29px; margin: 0 -6px; padding: 10px 7px 0; background: linear-gradient(#9ab4d2, #b9d1ea); }
.dlg-body { flex: 1; min-height: 0; display: flex; flex-direction: column; background: #f0f0f0; }
.dlg-body .tabs { padding-left: 2px; }
.dlg-body .tab { padding-right: 10px; }
.page { flex: 1; min-height: 0; display: flex; flex-direction: column; border: 1px solid #fff; border-width: 4px 3px 3px 4px; background: #f0f0f0; outline: 1px solid #d5d5d5; outline-offset: -1px; }
.page .toolbar { flex: none; height: 28px; }
.r1, .r2 { align-self: flex-start; padding: 0 6px 0 8px; gap: 8px; background: linear-gradient(#fcfcfc, #f1f1f1); border-radius: 3px; }
.page .toolbar .on { height: 23px; padding: 0 3px; border: 1px solid #0078d7; background: #dcebf7; }
.r1 button .arr { margin: 0 0 0 3px; }
.r1 { gap: 6px; }
.r1 > button:first-child { margin-right: 3px; }
.rebar select { width: 76px; height: 23px; padding-left: 2px; background: #fff; }
.combo.rebar .arr { margin-left: -10px; margin-right: 2px; }
.page .r1 .on { margin: 0 -2px 0 -4px; }
.page .toolbar.r2 { height: 28px; gap: 2px; }
.r2 > button:first-child { margin-right: 6px; }
.r2 .on { margin-right: 3px; }
.page .toolbar.r2 .on { padding: 0 4px; }
.canvas { flex: 1; min-height: 0; margin: 0 2px 0 1px; border: 2px solid #f00; background: #14181f; }
.canvas svg { width: 100%; height: 100%; fill: none; font-family: "Liberation Serif", "Noto Sans CJK SC", serif; }
.guide { stroke: #3a3f47; stroke-dasharray: 8 3 2 3; }
.lead { stroke: #888; stroke-dasharray: 3 3; }
.ghost { font: 13px "Liberation Mono", monospace; fill: #3c414a; }
.conc { stroke: #fff; stroke-width: 2; }
.hid { stroke: #b5cde5; stroke-dasharray: 4 3; }
.post { stroke: #fffff0; }
.bar-line { stroke: #cf151c; stroke-width: 4; }
.dots { stroke: #e7d236; stroke-width: 2; }
.dimline { stroke: #78c75e; }
.level { stroke: #999; }
.num { font-size: 7px; font-weight: 700; fill: #9cc8c8; }
.elev { font: 7px "Liberation Mono", monospace; fill: #18c420; }
.green { font-size: 8px; font-weight: 700; fill: #128c20; }
.note { font-size: 12px; fill: #ddd; }
.note tspan { fill: #0f0; }
.page .toolbar.r3 { height: 28px; padding-left: 2px; }
.r3 .on + .on { margin-left: -1px; }
.snap { height: 25px; display: flex; gap: 7px; margin-left: 3px; padding: 0 5px 0 4px; background: linear-gradient(#fdfdfd, #f1f1f1); }
.dlg-status { flex: none; height: 24px; padding-top: 2px; display: flex; gap: 2px; background: #fff; position: relative; }
.dlg-status span { border: 1px solid #d5d5d5; background: linear-gradient(#fdfdfd, #f0f0f0); line-height: 20px; white-space: nowrap; }
.xy { flex: 0 0 98px; padding-left: 4px; }
.msg { flex: 1; padding-left: 2px; }
.grip { position: absolute; right: 1px; bottom: 1px; width: 12px; height: 12px; }

.status { position: relative; flex: none; height: 23px; display: flex; gap: 2px; padding-top: 2px; background: #f8f8f8; border-top: 1px solid #ccc; }
.status > span { border: 1px solid #ccc; background: linear-gradient(#fcfcfc, #f0f0f0); padding-left: 1px; line-height: 18px; white-space: nowrap; }
.c1 { flex: 0 0 148px; }
.c2 { flex: 0 0 78px; }
.c3 { flex: 0 0 98px; }
.c4 { flex: 0 0 48px; }
.c5 { flex: 1; }
.ime { position: absolute; right: 0; bottom: 0; height: 23px; padding: 0 4px 0 0; display: flex; align-items: center; gap: 6px; background: #fff; color: #1d74c8; font: 700 15px/20px "Noto Sans CJK SC", sans-serif; }
.ime .s28 { margin-left: -2px; }

.taskbar { flex: none; height: 40px; display: flex; align-items: center; background: linear-gradient(90deg, #080b0b, #04161a 30%, #03161a 70%, #020809); color: #fff; }
.tk { height: 40px; width: 48px; margin-right: 1px; display: flex; align-items: center; justify-content: center; background: none; flex: none; }
.tk:nth-child(-n+2) { margin: 0; }
.find { flex: 0 0 150px; min-width: 0; height: 30px; padding: 0 6px 0 2px; display: flex; align-items: center; gap: 6px; background: #3b3c3d; }
.find input { flex: 1; min-width: 0; }
.find input::placeholder { color: #aaa; opacity: 1; }
.c-ie { color: #1686f0; }
.find + .tk { width: 50px; margin-right: 5px; }
.run { border-bottom: 2px solid #76b9ed; padding-top: 2px; width: 40px; margin: 0 5px 0 3px; }
.run.act { width: 47px; margin: 0; background: #36474b; }
.tray { margin-left: auto; display: flex; align-items: center; gap: 8px; height: 40px; }
.tray span { font-size: 13px; width: 16px; text-align: center; }
.tray time { width: 78px; text-align: center; line-height: 19px; font-size: 12px; }
.desk { width: 1px; height: 40px; background: #555; margin: 0 4px 0 11px; }
```
